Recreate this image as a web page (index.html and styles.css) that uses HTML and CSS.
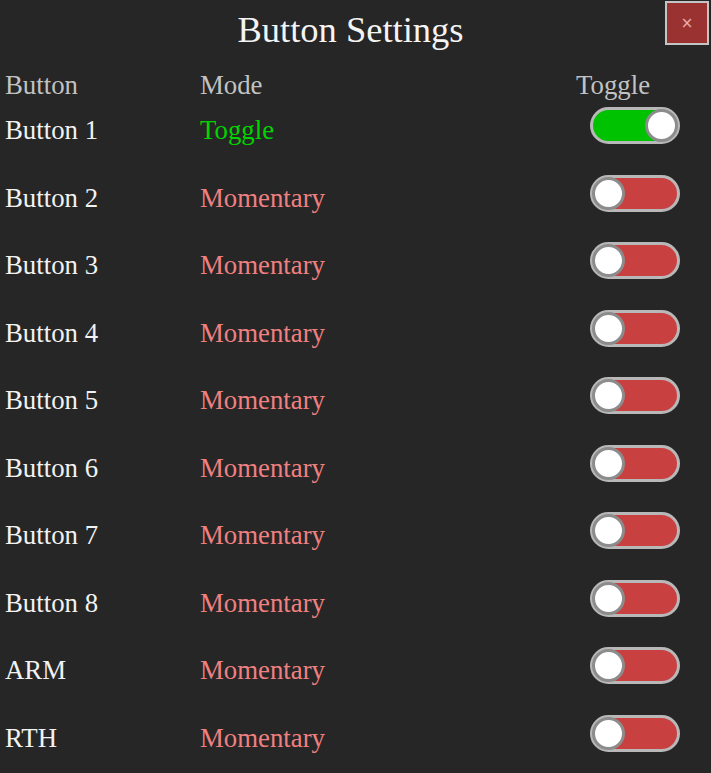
FILE: index.html
```html
<!DOCTYPE html>
<html>
<head>
<meta charset="utf-8">
<title>Button Settings</title>
<link rel="stylesheet" href="styles.css">
</head>
<body>
<div class="panel">
  <header class="title-bar">
    <h1 class="title">Button Settings</h1>
    <button class="close" type="button">×</button>
  </header>
  <div class="table">
    <div class="row head">
      <span class="name">Button</span>
      <span class="mode">Mode</span>
      <span class="toggle-head">Toggle</span>
    </div>
    <div class="row">
      <span class="name">Button 1</span>
      <span class="mode on">Toggle</span>
      <span class="switch on"><span class="knob"></span></span>
    </div>
    <div class="row">
      <span class="name">Button 2</span>
      <span class="mode">Momentary</span>
      <span class="switch"><span class="knob"></span></span>
    </div>
    <div class="row">
      <span class="name">Button 3</span>
      <span class="mode">Momentary</span>
      <span class="switch"><span class="knob"></span></span>
    </div>
    <div class="row">
      <span class="name">Button 4</span>
      <span class="mode">Momentary</span>
      <span class="switch"><span class="knob"></span></span>
    </div>
    <div class="row">
      <span class="name">Button 5</span>
      <span class="mode">Momentary</span>
      <span class="switch"><span class="knob"></span></span>
    </div>
    <div class="row">
      <span class="name">Button 6</span>
      <span class="mode">Momentary</span>
      <span class="switch"><span class="knob"></span></span>
    </div>
    <div class="row">
      <span class="name">Button 7</span>
      <span class="mode">Momentary</span>
      <span class="switch"><span class="knob"></span></span>
    </div>
    <div class="row">
      <span class="name">Button 8</span>
      <span class="mode">Momentary</span>
      <span class="switch"><span class="knob"></span></span>
    </div>
    <div class="row">
      <span class="name">ARM</span>
      <span class="mode">Momentary</span>
      <span class="switch"><span class="knob"></span></span>
    </div>
    <div class="row">
      <span class="name">RTH</span>
      <span class="mode">Momentary</span>
      <span class="switch"><span class="knob"></span></span>
    </div>
  </div>
</div>
</body>
</html>
```

FILE: styles.css
```css
html, body {
  margin: 0;
  padding: 0;
  background: #262626;
}
body {
  font-family: "Liberation Serif", "Times New Roman", serif;
  color: #f2f2f2;
  overflow: hidden;
}
.panel {
  width: 711px;
  height: 773px;
  background: #262626;
}
.title-bar {
  position: relative;
  height: 62px;
  display: flex;
  justify-content: center;
  padding-right: 10px;
}
.title {
  margin: 0;
  padding-top: 10px;
  font-weight: normal;
  font-size: 36.5px;
  line-height: 40px;
  color: #f4f4f4;
}
.close {
  position: absolute;
  top: 1px;
  right: 2px;
  width: 44px;
  height: 44px;
  padding: 0;
  border: 2px solid #c4c4c4;
  background: #9b3232;
  color: #e8b0b0;
  font-family: "DejaVu Sans", sans-serif;
  font-size: 15px;
  line-height: 38px;
  text-align: center;
}
.table {
  padding-left: 5px;
}
.row {
  display: grid;
  grid-template-columns: 195px 376px 135px;
  height: 67.5px;
  font-size: 26.8px;
  line-height: 30px;
}
.row.head {
  height: 45px;
  color: #c2c2c2;
  align-items: start;
}
.row .name, .row .mode {
  padding-top: 8px;
}
.row.head .name, .row.head .mode, .toggle-head {
  padding-top: 8px;
  color: #c2c2c2;
}
.mode {
  color: #f08080;
}
.mode.on {
  color: #00d400;
}
.switch {
  position: relative;
  box-sizing: border-box;
  margin-left: 14px;
  margin-top: 0;
  width: 90px;
  height: 37px;
  border: 3px solid #b8b8b8;
  border-radius: 19px;
  background: #c94040;
}
.switch.on {
  background: #00c200;
}
.knob {
  position: absolute;
  top: -1px;
  left: -1px;
  box-sizing: border-box;
  width: 33px;
  height: 33px;
  border: 3px solid #8c8c8c;
  border-radius: 50%;
  background: #ffffff;
}
.switch.on .knob {
  left: auto;
  right: -1px;
}
```
